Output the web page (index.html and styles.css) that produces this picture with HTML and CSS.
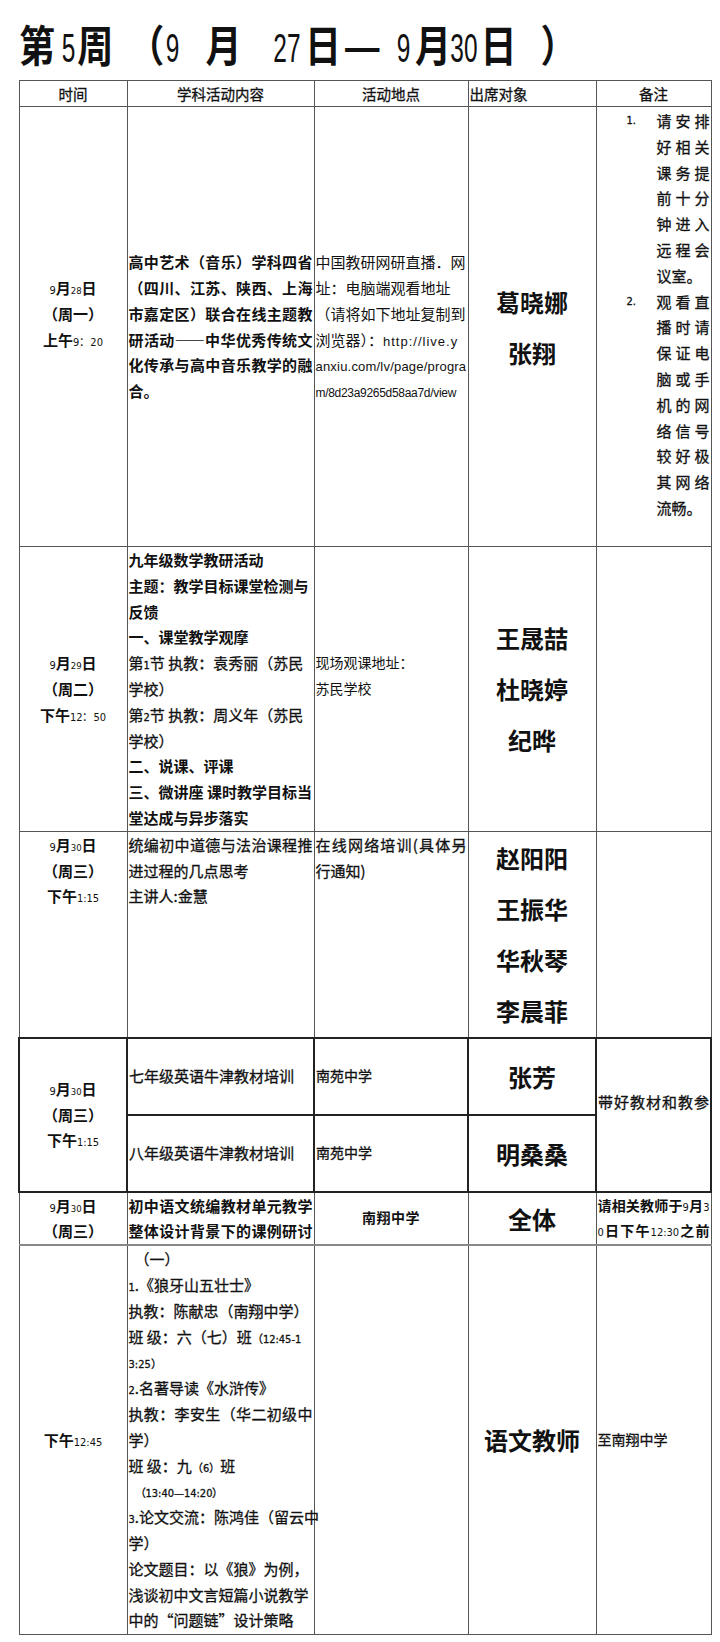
FILE: index.html
```html
<!DOCTYPE html>
<html lang="zh-CN">
<head>
<meta charset="utf-8">
<title>第5周活动安排</title>
<link rel="stylesheet" href="styles.css">
</head>
<body>
<h1 class="title"><span class="cj">第</span><span class="tn t1 g65">5</span><span class="cj g2">周</span><span class="cj g15">（</span><span class="tn t1 g0">9</span><span class="cj g24">月</span><span class="tn t2 g29">27</span><span class="cj g5">日</span><span class="cj dash">—</span><span class="tn t1 g22">9</span><span class="cj g5">月</span><span class="tn t2 gm2">30</span><span class="cj g3">日</span><span class="cj g19">）</span></h1>
<table class="sched">
<colgroup><col class="c1"><col class="c2"><col class="c3"><col class="c4"><col class="c5"></colgroup>
<thead>
<tr class="hd"><th>时间</th><th>学科活动内容</th><th>活动地点</th><th class="l">出席对象</th><th>备注</th></tr>
</thead>
<tbody>
<tr class="r1">
<td class="tm"><div><span class="d">9</span>月<span class="d dd">28</span>日</div><div>（周一）</div><div>上午<span class="d">9：20</span></div><div>&nbsp;</div></td>
<td class="b"><p class="j">高中艺术（音乐）学科四省<br>（四川、江苏、陕西、上海<br>市嘉定区）联合在线主题教<br>研活动——中华优秀传统文<br>化传承与高中音乐教学的融</p><p>合。</p></td>
<td class="nw">中国教研网研直播．网<br>址：电脑端观看地址<br>（请将如下地址复制到<br>浏览器）：<span class="u1">http://live.y</span><br><span class="u2">anxiu.com/lv/page/progra</span><br><span class="u3">m/8d23a9265d58aa7d/view</span></td>
<td class="nm">葛晓娜<br>张翔</td>
<td class="top note">
<div class="li"><span class="num">1.</span><div class="lt"><p class="j">请安排<br>好相关<br>课务提<br>前十分<br>钟进入<br>远程会</p><p>议室。</p></div></div>
<div class="li"><span class="num">2.</span><div class="lt"><p class="j">观看直<br>播时请<br>保证电<br>脑或手<br>机的网<br>络信号<br>较好极<br>其网络</p><p>流畅。</p></div></div>
</td>
</tr>
<tr class="r2">
<td class="tm"><div><span class="d">9</span>月<span class="d dd">29</span>日</div><div>（周二）</div><div>下午<span class="d">12：50</span></div></td>
<td class="top nw">
<p class="b">九年级数学教研活动</p>
<p class="b">主题：教学目标课堂检测与<br>反馈</p>
<p class="b">一、课堂教学观摩</p>
<p class="m">第<span class="d">1</span>节 执教：袁秀丽（苏民<br>学校）</p>
<p class="m">第<span class="d">2</span>节 执教：周义年（苏民<br>学校）</p>
<p class="b">二、说课、评课</p>
<p class="b">三、微讲座 课时教学目标当<br>堂达成与异步落实</p>
</td>
<td class="nw sm">现场观课地址：<br>苏民学校<br>&nbsp;</td>
<td class="nm n52">王晟喆<br>杜晓婷<br>纪晔</td>
<td></td>
</tr>
<tr class="r3">
<td class="tm top"><div><span class="d">9</span>月<span class="d dd">30</span>日</div><div>（周三）</div><div>下午<span class="d">1:15</span></div></td>
<td class="top m"><p class="j">统编初中道德与法治课程推</p><p>进过程的几点思考</p><p>主讲人:金慧</p></td>
<td class="top m"><p class="j">在线网络培训(具体另</p><p>行通知)</p></td>
<td class="nm n52 top">赵阳阳<br>王振华<br>华秋琴<br>李晨菲</td>
<td></td>
</tr>
<tr class="r4a dk">
<td class="tm" rowspan="2"><div><span class="d">9</span>月<span class="d dd">30</span>日</div><div>（周三）</div><div>下午<span class="d">1:15</span></div></td>
<td class="m nw">七年级英语牛津教材培训</td>
<td class="m nw sm">南苑中学</td>
<td class="nm">张芳</td>
<td class="m nw sp" rowspan="2">带好教材和教参<br>&nbsp;</td>
</tr>
<tr class="r4b dk">
<td class="m nw">八年级英语牛津教材培训</td>
<td class="m nw sm">南苑中学</td>
<td class="nm">明桑桑</td>
</tr>
<tr class="r5">
<td class="tm top"><div><span class="d">9</span>月<span class="d dd">30</span>日</div><div>（周三）</div></td>
<td class="top b"><p class="j">初中语文统编教材单元教学<br>整体设计背景下的课例研讨</p></td>
<td class="ctr b sm sp1">南翔中学</td>
<td class="nm">全体</td>
<td class="top b f14"><p class="j">请相关教师于<span class="d">9</span>月<span class="d">3</span><br><span class="d">0</span>日下午<span class="d">12:30</span>之前</p></td>
</tr>
<tr class="r6">
<td class="tm"><div>下午<span class="d">12:45</span></div></td>
<td class="top m nw">
<p class="ind">（一）</p>
<p><span class="d">1</span>.《狼牙山五壮士》</p>
<p>执教：陈献忠（南翔中学）</p>
<p>班 级：六（七）班<span class="d">（12:45-1</span><br><span class="d">3:25）</span></p>
<p><span class="d">2</span>.名著导读《水浒传》</p>
<p class="j">执教：李安生（华二初级中</p><p>学）</p>
<p>班 级：九<span class="d">（6）</span>班</p>
<p class="ind"><span class="d">（13:40—14:20）</span></p>
<p class="j"><span class="d">3</span>.论文交流：陈鸿佳（留云中</p><p>学）</p>
<p>论文题目：以《狼》为例，</p>
<p>浅谈初中文言短篇小说教学</p>
<p>中的“问题链”设计策略</p>
</td>
<td></td>
<td class="nm">语文教师</td>
<td class="m nw sm">至南翔中学</td>
</tr>
</tbody>
</table>
</body>
</html>
```
FILE: styles.css
```css
* { box-sizing: border-box; }
html, body { margin: 0; padding: 0; background: #fff; }
body {
  width: 720px;
  height: 1642px;
  overflow: hidden;
  color: #111;
  font-family: "Noto Sans CJK SC", "Noto Sans", sans-serif;
}
p { margin: 0; }

/* title */
.title {
  margin: 0;
  height: 80px;
  padding: 21px 0 0 19px;
  font-size: 36px;
  font-weight: 700;
  line-height: 44px;
  white-space: nowrap;
  color: #111;
  transform: scaleY(1.2);
  transform-origin: 0 43px;
}
.title .cj { display: inline-block; }
.title .dash { margin-left: 2px; transform: scaleX(1.18); transform-origin: 0 50%; }
.title .tn {
  display: inline-block;
  font-family: "Liberation Sans", sans-serif;
  font-weight: 400;
  font-size: 34px;
  transform: scaleX(0.72);
}
.title .t1 { margin-right: -2.7px; }
.title .t2 { margin-right: -5.3px; }
.g0 { margin-left: -1px; }
.g2 { margin-left: 2px; }
.g3 { margin-left: 3px; }
.g5 { margin-left: 5px; }
.g15 { margin-left: 15px; }
.g19 { margin-left: 24px; }
.g22 { margin-left: 18px; }
.g24 { margin-left: 26px; }
.g29 { margin-left: 26px; }
.g65 { margin-left: 4px; }
.gm2 { margin-left: -6px; }

/* table */
.sched {
  border-collapse: collapse;
  table-layout: fixed;
  width: 692px;
  margin-left: 18px;
}
.c1 { width: 108px; }
.c2 { width: 187px; }
.c3 { width: 154px; }
.c4 { width: 128px; }
.c5 { width: 115px; }

.sched th,
.sched td {
  border: 1px solid #555;
  padding: 0 1px;
  vertical-align: middle;
  text-align: left;
  font-size: 15px;
  line-height: 25.8px;
  font-weight: 400;
  color: #111;
}
.sched th {
  text-align: center;
  font-size: 14.5px;
  line-height: 24px;
  -webkit-text-stroke: 0.3px #111;
}
.sched th.l { text-align: left; }

.hd { height: 26px; }
.r1 { height: 440px; }
.r2 { height: 284px; }
.r3 { height: 205px; }
.r4a { height: 77px; }
.r4b { height: 77px; }
.r5 { height: 53px; }
.r6 { height: 389px; }

.dk td { border-color: #222; border-width: 2px; }
.r5 td { border-bottom: 2px solid #888; }

.top { vertical-align: top !important; }
.nw { white-space: nowrap; }
.ctr { text-align: center !important; }
.b { font-weight: 700 !important; }
.m { -webkit-text-stroke: 0.3px #111; }
.sm { font-size: 14px !important; }
.f14 { font-size: 14px !important; }
.sp { letter-spacing: 1px; }
.sp1 { letter-spacing: 0.5px; }

.j { text-align: justify; text-align-last: justify; }
.ind { padding-left: 6px; }

/* time column */
.tm {
  text-align: center !important;
  font-weight: 700 !important;
  white-space: nowrap;
}
.d {
  font-family: "Liberation Sans Narrow", "DejaVu Sans Condensed", "Liberation Sans", sans-serif;
  font-size: 11px;
  font-weight: 400;
  line-height: 1;
}
.dd { font-size: 9.5px; }

/* names */
.nm {
  text-align: center !important;
  font-size: 24px !important;
  font-weight: 700 !important;
  line-height: 51px !important;
  white-space: nowrap;
}
.n52 { line-height: 51.2px !important; }

/* note list */
.note { padding-top: 1px !important; -webkit-text-stroke: 0.3px #111; }
.li { display: flex; }
.num {
  width: 59px;
  padding-left: 29px;
  font-family: "Liberation Sans Narrow", "DejaVu Sans Condensed", "Liberation Sans", sans-serif;
  font-size: 11px;
}
.lt { width: 53px; }

/* url */
.u1, .u2, .u3 { font-family: "Liberation Sans", sans-serif; line-height: 1; }
.u1 { font-size: 13px; letter-spacing: 1px; }
.u2 { font-size: 13px; letter-spacing: 0.2px; }
.u3 { font-size: 12px; letter-spacing: -0.3px; }
```
